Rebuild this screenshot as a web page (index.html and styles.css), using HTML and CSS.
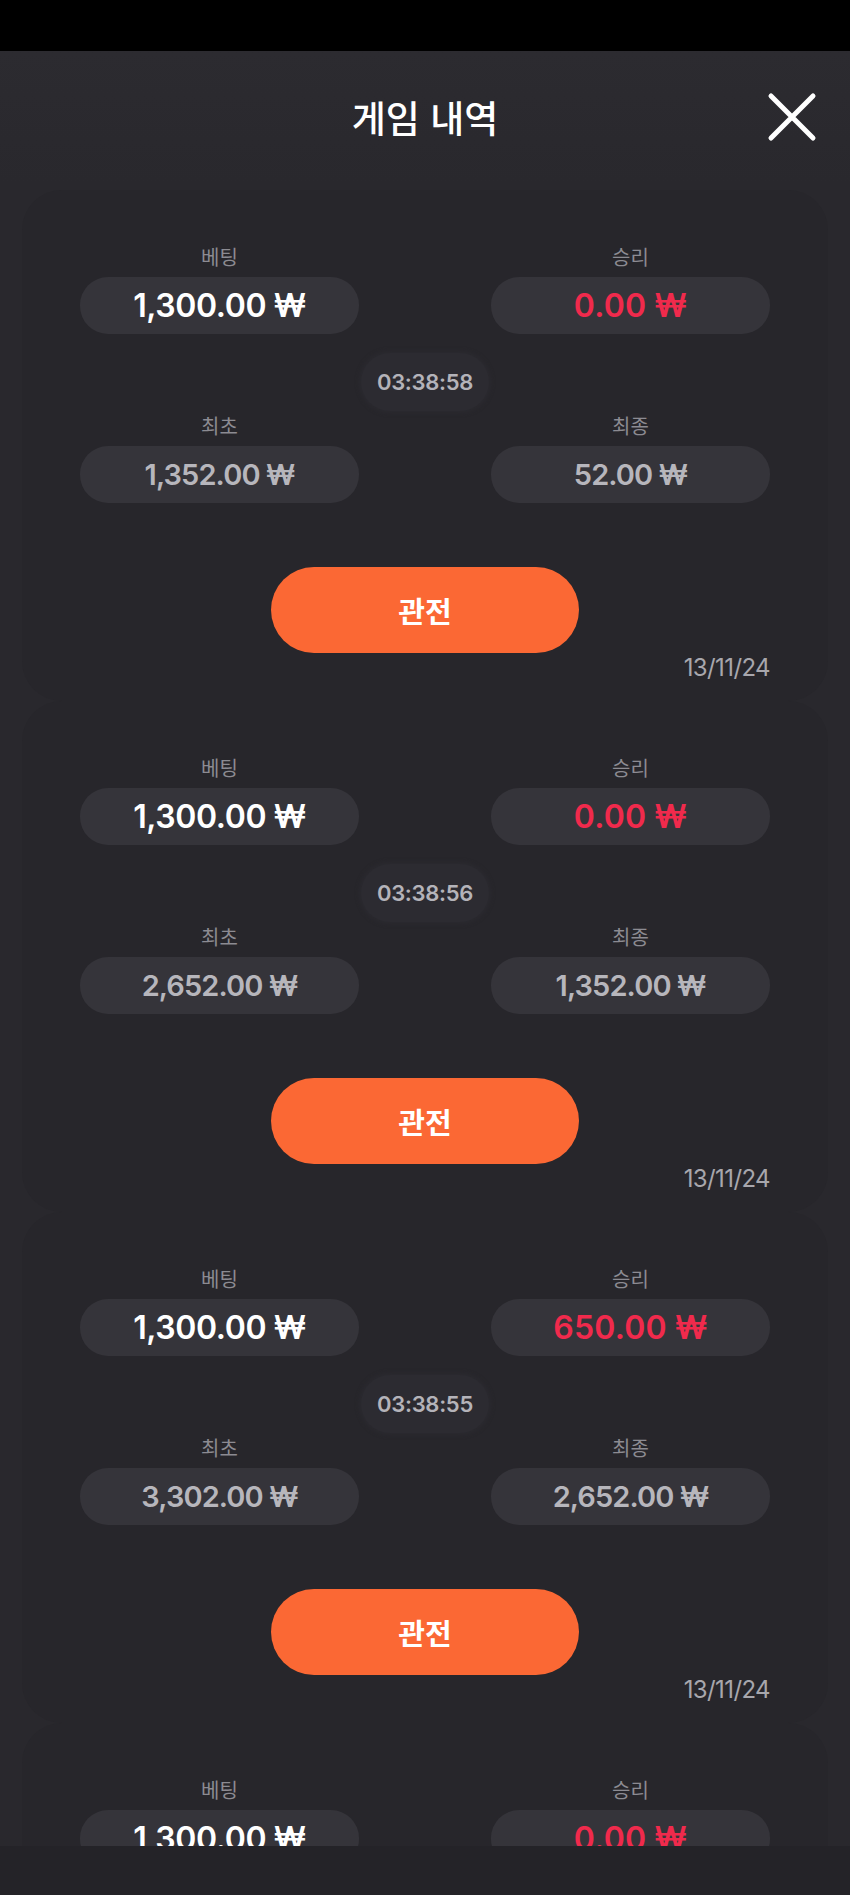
FILE: index.html
```html
<!DOCTYPE html>
<html lang="ko">
<head>
    <meta charset="UTF-8">
    <meta name="viewport" content="width=device-width, initial-scale=1.0">
    <title>게임 내역</title>
    <link rel="stylesheet" href="styles.css">
</head>
<body>

    <div class="status-bar"></div>

    <div class="header">
        <h2>게임 내역</h2>
        <button class="close-btn" aria-label="닫기">
            <svg width="52" height="52" viewBox="0 0 52 52">
                <path d="M5 5 L47 47 M47 5 L5 47" stroke="#fff" stroke-width="5" stroke-linecap="round" fill="none"/>
            </svg>
        </button>
    </div>

    <div class="history-list">

        <div class="card">
            <div class="stats">
                <div class="stat">
                    <span class="label">베팅</span>
                    <div class="pill bet">1,300.00 ₩</div>
                </div>
                <div class="stat right">
                    <span class="label">승리</span>
                    <div class="pill win">0.00 ₩</div>
                </div>
                <div class="time">03:38:58</div>
                <div class="stat">
                    <span class="label">최초</span>
                    <div class="pill">1,352.00 ₩</div>
                </div>
                <div class="stat right">
                    <span class="label">최종</span>
                    <div class="pill">52.00 ₩</div>
                </div>
            </div>
            <button class="watch-btn">관전</button>
            <div class="date">13/11/24</div>
        </div>

        <div class="card">
            <div class="stats">
                <div class="stat">
                    <span class="label">베팅</span>
                    <div class="pill bet">1,300.00 ₩</div>
                </div>
                <div class="stat right">
                    <span class="label">승리</span>
                    <div class="pill win">0.00 ₩</div>
                </div>
                <div class="time">03:38:56</div>
                <div class="stat">
                    <span class="label">최초</span>
                    <div class="pill">2,652.00 ₩</div>
                </div>
                <div class="stat right">
                    <span class="label">최종</span>
                    <div class="pill">1,352.00 ₩</div>
                </div>
            </div>
            <button class="watch-btn">관전</button>
            <div class="date">13/11/24</div>
        </div>

        <div class="card">
            <div class="stats">
                <div class="stat">
                    <span class="label">베팅</span>
                    <div class="pill bet">1,300.00 ₩</div>
                </div>
                <div class="stat right">
                    <span class="label">승리</span>
                    <div class="pill win">650.00 ₩</div>
                </div>
                <div class="time">03:38:55</div>
                <div class="stat">
                    <span class="label">최초</span>
                    <div class="pill">3,302.00 ₩</div>
                </div>
                <div class="stat right">
                    <span class="label">최종</span>
                    <div class="pill">2,652.00 ₩</div>
                </div>
            </div>
            <button class="watch-btn">관전</button>
            <div class="date">13/11/24</div>
        </div>

        <div class="card">
            <div class="stats">
                <div class="stat">
                    <span class="label">베팅</span>
                    <div class="pill bet">1,300.00 ₩</div>
                </div>
                <div class="stat right">
                    <span class="label">승리</span>
                    <div class="pill win">0.00 ₩</div>
                </div>
                <div class="time">03:38:53</div>
                <div class="stat">
                    <span class="label">최초</span>
                    <div class="pill">4,602.00 ₩</div>
                </div>
                <div class="stat right">
                    <span class="label">최종</span>
                    <div class="pill">3,302.00 ₩</div>
                </div>
            </div>
            <button class="watch-btn">관전</button>
            <div class="date">13/11/24</div>
        </div>

    </div>

    <div class="footer"></div>

</body>
</html>
```

FILE: styles.css
```css
body {
    margin: 0;
    padding: 0;
    width: 850px;
    height: 1895px;
    overflow: hidden;
    font-family: 'Noto Sans CJK KR', 'Noto Sans', sans-serif;
    background: #29282d;
    color: #fff;
}

.status-bar {
    height: 51px;
    background: #000;
}

.header {
    height: 132px;
    display: flex;
    justify-content: center;
    align-items: center;
    position: relative;
    background: linear-gradient(#2c2b30, #29282d);
}

h2 {
    margin: 0;
    font-size: 37px;
    font-weight: 500;
}

.close-btn {
    position: absolute;
    right: 32px;
    top: 40px;
    width: 52px;
    height: 52px;
    padding: 0;
    border: none;
    background: none;
    cursor: pointer;
}

.close-btn svg {
    display: block;
}

.history-list {
    height: 1663px;
    padding-top: 7px;
    box-sizing: border-box;
    overflow: hidden;
}

.card {
    margin: 0 22px;
    height: 511px;
    box-sizing: border-box;
    padding: 54px 58px 0;
    background: #27262b;
    border-radius: 40px;
}

.stats {
    display: grid;
    grid-template-columns: 279px 132px 279px;
}

.stat {
    grid-column: 1;
    display: flex;
    flex-direction: column;
    align-items: center;
    gap: 7px;
}

.stat.right {
    grid-column: 3;
}

.label {
    font-size: 20px;
    line-height: 26px;
    color: #8c8b92;
}

.pill {
    width: 100%;
    height: 57px;
    border-radius: 28px;
    background: #35343a;
    display: flex;
    justify-content: center;
    align-items: center;
    font-family: 'Inter', sans-serif;
    font-size: 29px;
    font-weight: 600;
    letter-spacing: -0.9px;
    color: #b7b6bc;
}

.pill.bet {
    font-size: 32px;
    letter-spacing: -0.4px;
    color: #fff;
}

.pill.win {
    font-size: 32px;
    letter-spacing: 0.2px;
    color: #f02a4c;
}

.time {
    grid-column: 2;
    justify-self: center;
    width: 128px;
    height: 58px;
    margin: 19px 0 2px;
    border-radius: 29px;
    background: #2c2b31;
    box-shadow: 0 0 5px 1px #2c2b31;
    display: flex;
    justify-content: center;
    align-items: center;
    font-family: 'Inter', sans-serif;
    font-size: 22px;
    font-weight: 600;
    letter-spacing: -0.3px;
    color: #b4b3b9;
}

.watch-btn {
    display: block;
    margin: 64px auto 0;
    width: 308px;
    height: 86px;
    border: none;
    border-radius: 43px;
    background: #fb6834;
    color: #fff;
    font-family: 'Noto Sans CJK KR', sans-serif;
    font-size: 29px;
    font-weight: 700;
    cursor: pointer;
}

.date {
    margin-top: 3px;
    text-align: right;
    font-family: 'Inter', sans-serif;
    font-size: 24px;
    line-height: 24px;
    letter-spacing: -0.6px;
    color: #a8a7ad;
}

.footer {
    height: 49px;
    background: #242328;
}
```
